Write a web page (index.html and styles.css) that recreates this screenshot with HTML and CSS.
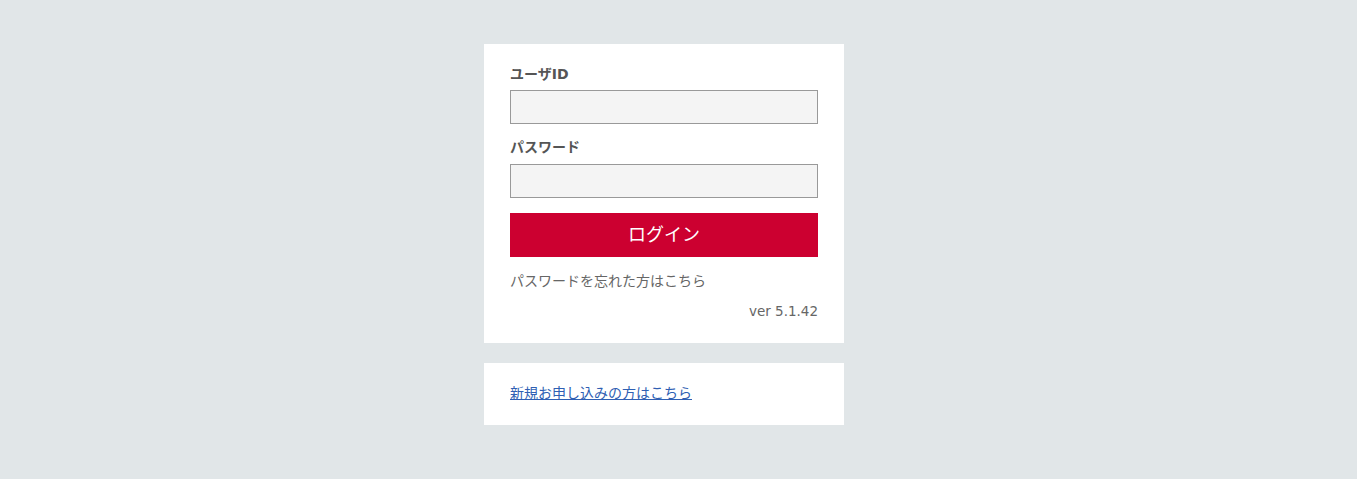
FILE: index.html
```html
<!DOCTYPE html>
<html lang="ja">
<head>
<meta charset="utf-8">
<title>ログイン</title>
<link rel="stylesheet" href="styles.css">
</head>
<body>
<main class="wrap">
  <section class="card login">
    <label class="label" for="uid">ユーザID</label>
    <input class="field" id="uid" type="text">
    <label class="label label-pw" for="pw">パスワード</label>
    <input class="field" id="pw" type="password">
    <button class="btn" type="button">ログイン</button>
    <p class="forgot">パスワードを忘れた方はこちら</p>
    <p class="ver">ver 5.1.42</p>
  </section>
  <section class="card signup">
    <a class="link" href="#">新規お申し込みの方はこちら</a>
  </section>
</main>
</body>
</html>
```

FILE: styles.css
```css
html, body {
  margin: 0;
  padding: 0;
}
body {
  background: #e1e6e8;
  font-family: "DejaVu Sans", "Noto Sans CJK JP", sans-serif;
  color: #555;
  font-size: 14px;
  padding-right: 29px;
}
.wrap {
  width: 360px;
  margin: 44px auto 0;
  display: flex;
  flex-direction: column;
  gap: 20px;
}
.card {
  background: #fff;
  padding: 20px 26px 22px;
  display: flex;
  flex-direction: column;
}
.label {
  font-weight: bold;
  line-height: 20px;
  color: #555;
  margin-bottom: 6px;
}
.label-pw {
  margin-top: 13px;
  margin-bottom: 7px;
}
.field {
  box-sizing: border-box;
  width: 308px;
  height: 34px;
  margin: 0;
  border: 1px solid #999;
  background: #f4f4f4;
  padding: 0 8px;
  font-size: 14px;
}
.btn {
  margin-top: 15px;
  height: 44px;
  width: 308px;
  border: none;
  background: #cc0030;
  color: #fff;
  font-family: "Noto Sans CJK JP", sans-serif;
  font-size: 18px;
  line-height: 40px;
  padding: 0 0 4px;
}
.forgot {
  margin: 14px 0 0;
  line-height: 20px;
  color: #666;
}
.ver {
  margin: 10px 0 0;
  line-height: 20px;
  text-align: right;
  color: #666;
  font-size: 13.5px;
}
.link {
  line-height: 20px;
  color: #2f5fb3;
  text-decoration: underline;
}
```
